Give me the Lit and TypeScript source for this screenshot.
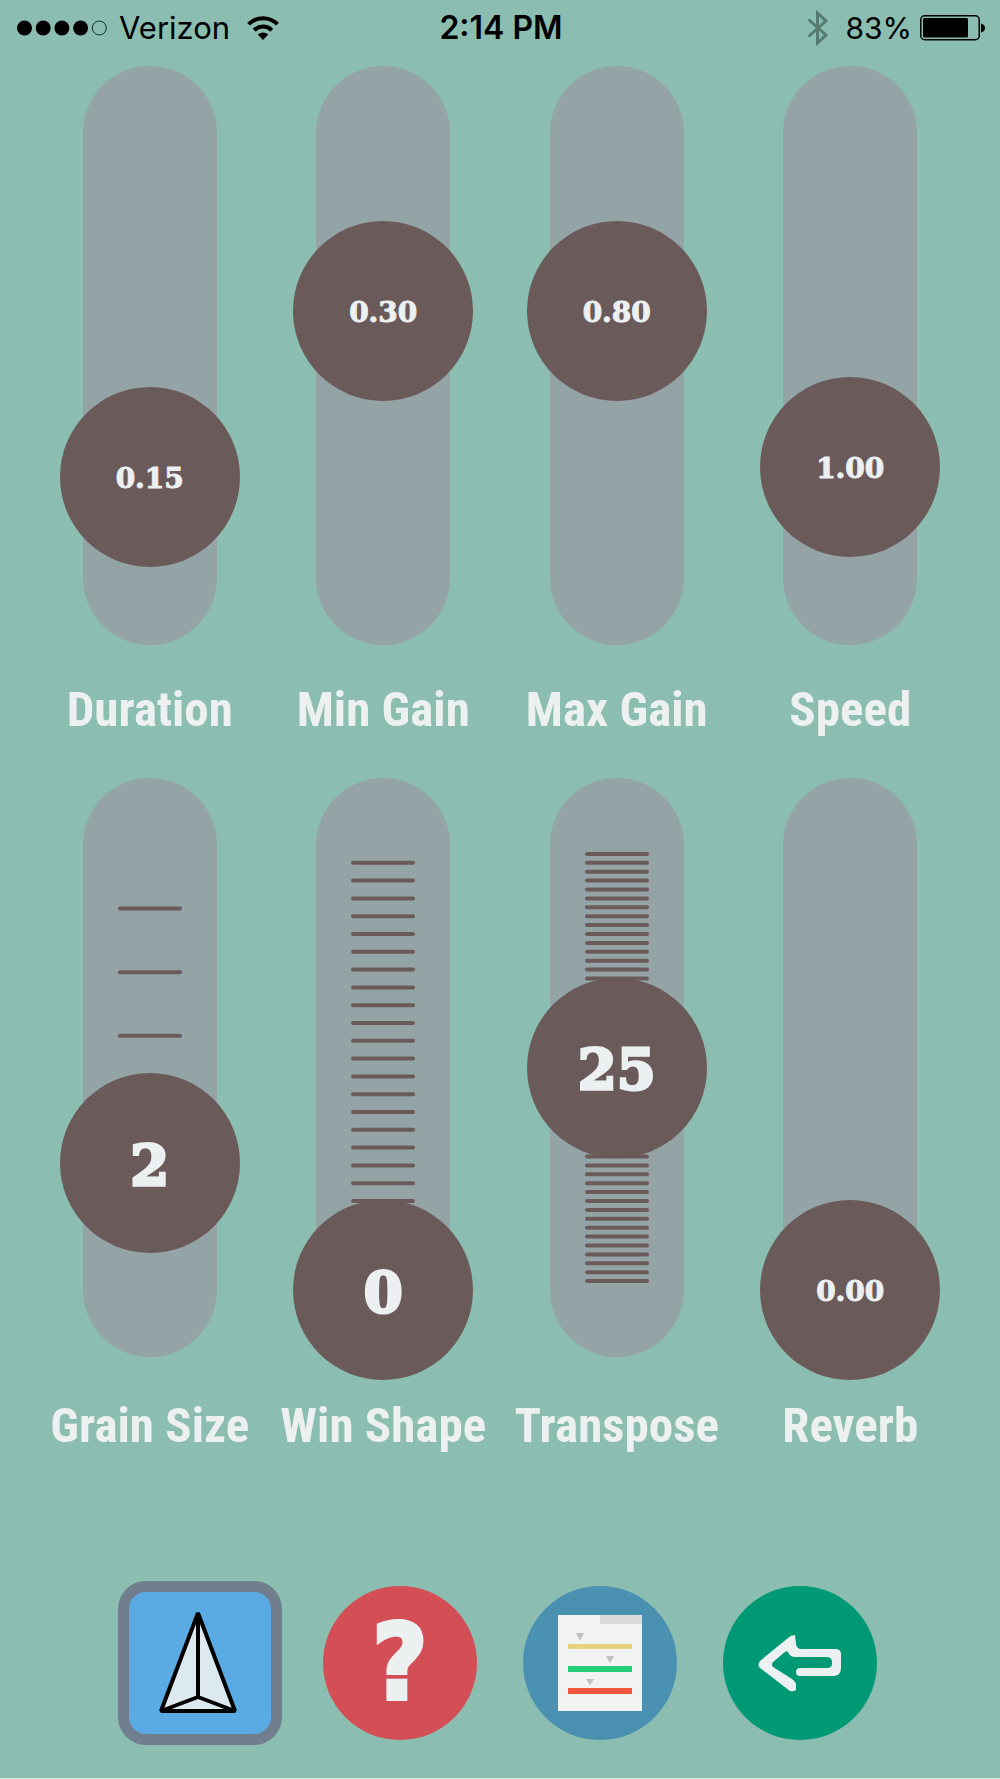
import { LitElement, html, svg, css } from "lit";
import { customElement, property, state } from "lit/decorators.js";

interface Param {
  id: string;
  label: string;
  /** Travel of the knob, from 0 at the bottom to 1 at the top. */
  position: number;
  /** Number of discrete steps; 0 for a continuous control. */
  steps: number;
  format: (position: number) => string;
}

const linear = (max: number) => (p: number) => (p * max).toFixed(2);

const ROWS: Param[][] = [
  [
    { id: "duration", label: "Duration", position: 0.226, steps: 0, format: (p) => (p * 0.664).toFixed(2) },
    { id: "min-gain", label: "Min Gain", position: 0.6, steps: 0, format: linear(0.5) },
    { id: "max-gain", label: "Max Gain", position: 0.6, steps: 0, format: (p) => (0.5 + p * 0.5).toFixed(2) },
    { id: "speed", label: "Speed", position: 0.25, steps: 0, format: linear(4) },
  ],
  [
    { id: "grain-size", label: "Grain Size", position: 2 / 7, steps: 7, format: (p) => String(Math.round(p * 7)) },
    { id: "win-shape", label: "Win Shape", position: 0, steps: 25, format: (p) => String(Math.round(p * 25)) },
    { id: "transpose", label: "Transpose", position: 0.5, steps: 50, format: (p) => String(Math.round(p * 50)) },
    { id: "reverb", label: "Reverb", position: 0, steps: 0, format: linear(1) },
  ],
];

/** Knob travel in pixels: track height less the two rounded ends. */
const TRAVEL = 445;
const TRACK_END = 67;

@customElement("param-slider")
class ParamSlider extends LitElement {
  static styles = css`
    :host {
      display: flex;
      flex-direction: column;
      align-items: center;
      gap: var(--label-gap, 33px);
    }
    .well {
      position: relative;
      display: flex;
      align-items: center;
      justify-content: center;
      width: 134px;
      height: 579px;
      border-radius: 67px;
      background: #94a4a6;
    }
    .ticks {
      position: absolute;
      inset: 0;
      stroke: #6b5a5a;
      stroke-width: 4;
      stroke-linecap: round;
    }
    .range {
      appearance: none;
      -webkit-appearance: none;
      flex: none;
      position: relative;
      writing-mode: vertical-lr;
      direction: rtl;
      width: 180px;
      height: 625px;
      margin: 0;
      background: transparent;
      cursor: grab;
    }
    .range::-webkit-slider-runnable-track {
      width: 180px;
      height: 100%;
      background: transparent;
    }
    .range::-webkit-slider-thumb {
      -webkit-appearance: none;
      width: 180px;
      height: 180px;
      border-radius: 50%;
      background: #6b5a5a;
    }
    .range::-moz-range-thumb {
      width: 180px;
      height: 180px;
      border: 0;
      border-radius: 50%;
      background: #6b5a5a;
    }
    .value {
      position: absolute;
      left: 0;
      right: 0;
      height: 60px;
      margin-bottom: -32px;
      text-align: center;
      pointer-events: none;
      color: #ecf0f1;
      font: bold 28px/60px "DejaVu Serif", serif;
      -webkit-text-stroke: 1px #ecf0f1;
    }
    .value.stepped {
      font-size: 56px;
      -webkit-text-stroke: 3px #ecf0f1;
    }
    .name {
      color: #ecf0f1;
      font: bold 49px/64px "Roboto Condensed", "Liberation Sans Narrow", "Liberation Sans", sans-serif;
      white-space: nowrap;
    }
  `;

  @property({ attribute: false }) param!: Param;
  @state() private moved?: number;

  private onInput(e: Event) {
    this.moved = Number((e.target as HTMLInputElement).value);
  }

  render() {
    const { id, label, steps, format } = this.param;
    const position = this.moved ?? this.param.position;
    const ticks = Array.from({ length: Math.max(steps - 1, 0) }, (_, i) => {
      const y = TRACK_END + (TRAVEL * (i + 1)) / steps;
      return svg`<line x1="37" x2="97" y1=${y} y2=${y}></line>`;
    });
    return html`
      <div class="well">
        <svg class="ticks" width="134" height="579" viewBox="0 0 134 579" aria-hidden="true">${ticks}</svg>
        <input
          class="range"
          id=${id}
          type="range"
          min="0"
          max="1"
          step="any"
          .value=${String(position)}
          @input=${this.onInput}
        />
        <output
          class="value ${steps ? "stepped" : ""}"
          for=${id}
          style="bottom:${Math.round(TRACK_END + TRAVEL * position)}px"
          >${format(position)}</output
        >
      </div>
      <label class="name" for=${id}>${label}</label>
    `;
  }
}

@customElement("status-bar")
class StatusBar extends LitElement {
  static styles = css`
    :host {
      display: grid;
      grid-template-columns: 1fr auto 1fr;
      align-items: center;
      height: 52px;
      padding: 2px 15px 0 17px;
      color: #000;
      font: 30px/36px Inter, "Liberation Sans", sans-serif;
    }
    .side {
      display: flex;
      align-items: center;
      gap: 12px;
    }
    .end {
      justify-content: flex-end;
    }
    .carrier {
      font-size: 31px;
    }
    .charge {
      display: flex;
      align-items: center;
      gap: 8px;
    }
    .time {
      font-size: 32px;
      font-weight: 600;
    }
    .bluetooth {
      margin-right: 4px;
    }
  `;

  render() {
    return html`
      <div class="side">
        <svg width="90" height="16" viewBox="0 0 90 16" aria-hidden="true">
          ${[0, 1, 2, 3].map((i) => svg`<circle cx=${7.5 + i * 18.7} cy="8" r="7.5"></circle>`)}
          <circle cx="82.3" cy="8" r="7" fill="none" stroke="#10302a" stroke-width="1"></circle>
        </svg>
        <span class="carrier">Verizon</span>
        <svg width="42" height="26" viewBox="0 0 42 26" aria-hidden="true">
          <g fill="none" stroke="#000" stroke-width="4">
            <path d="M6.5 9.2a20.5 20.5 0 0 1 29 0"></path>
            <path d="M12.2 15.2a12.6 12.6 0 0 1 17.6 0"></path>
          </g>
          <path d="M21 25l-5.2-5.4a7.4 7.4 0 0 1 10.4 0z"></path>
        </svg>
      </div>
      <div class="time">2:14 PM</div>
      <div class="side end">
        <svg class="bluetooth" width="22" height="36" viewBox="0 0 22 36" aria-hidden="true">
          <path
            d="M1.5 9.5L19 25l-8.5 8V3L19 11 1.5 26.5"
            fill="none"
            stroke="#557b71"
            stroke-width="3"
          ></path>
        </svg>
        <div class="charge">
          <span>83%</span>
          <svg width="65" height="26" viewBox="0 0 65 26" aria-hidden="true">
            <rect x="0.75" y="0.75" width="58.5" height="24" rx="4" fill="none" stroke="#000" stroke-width="1.5"></rect>
            <rect x="3" y="3" width="45" height="19.5" rx="1.5"></rect>
            <path d="M61 8.5q4 1 4 4.500t-4 4.500z"></path>
          </svg>
        </div>
      </div>
    `;
  }
}

@customElement("app-root")
class AppRoot extends LitElement {
  static styles = css`
    :host {
      display: block;
      box-sizing: border-box;
      min-height: 100vh;
      background: #8bbdb1;
      border-bottom: 1px solid #cdeee5;
    }
    .panel {
      display: flex;
      flex-direction: column;
      gap: 36px;
      padding: 12px 33px 0;
    }
    .row {
      display: grid;
      grid-template-columns: repeat(4, 1fr);
    }
    .row:last-child {
      --label-gap: 37px;
    }
    .actions {
      display: grid;
      grid-template-columns: repeat(4, 1fr);
      place-items: center;
      margin-top: 123px;
      padding: 0 100px 33px;
    }
    .action {
      box-sizing: border-box;
      display: flex;
      align-items: center;
      justify-content: center;
      width: 154px;
      height: 154px;
      padding: 0;
      border: 0;
      border-radius: 50%;
      cursor: pointer;
    }
    .draw {
      width: 164px;
      height: 164px;
      border: 11px solid #707e8e;
      border-radius: 28px;
      background: #5aabe3;
    }
    .help {
      background: #d44e55;
      color: #ecf0f1;
      font: bold 106px/154px "DejaVu Sans Condensed", "DejaVu Sans", sans-serif;
      -webkit-text-stroke: 4px #ecf0f1;
    }
    .presets {
      background: #4a90b0;
    }
    .back {
      background: #009975;
    }
    .icon {
      flex: none;
      display: block;
    }
  `;

  render() {
    return html`
      <status-bar></status-bar>
      <main>
        <div class="panel">
          ${ROWS.map(
            (row) => html`<div class="row">${row.map((p) => html`<param-slider .param=${p}></param-slider>`)}</div>`,
          )}
        </div>
        <nav class="actions">
          <button class="action draw" type="button" aria-label="Shape">
            <svg class="icon" width="142" height="142" viewBox="11 11 142 142">
              <g stroke="#000" stroke-width="4" stroke-linejoin="bevel">
                <path d="M80 32L43 130H117Z" fill="#dce9ee"></path>
                <path d="M80 32V116M43 130L80 116L117 130" fill="none"></path>
              </g>
            </svg>
          </button>
          <button class="action help" type="button" aria-label="Help">?</button>
          <button class="action presets" type="button" aria-label="Presets">
            <svg class="icon" width="154" height="154" viewBox="0 0 154 154">
              <path d="M35 29H119V125H35Z" fill="#f1f2f2"></path>
              <path d="M77 29H119V38H77Z" fill="#dadbdb"></path>
              <path d="M53 47H61L57 55ZM83 70H91L87 77ZM63 93H71L67 99Z" fill="#bfc0c0"></path>
              <path d="M45 58H109V63H45Z" fill="#e8d27c"></path>
              <path d="M45 80H109V86H45Z" fill="#25cf78"></path>
              <path d="M45 102H109V108H45Z" fill="#f1543b"></path>
            </svg>
          </button>
          <button class="action back" type="button" aria-label="Back">
            <svg class="icon" width="154" height="154" viewBox="0 0 154 154">
              <path
                d="M72 49Q68 49 65 52L37 75Q34 79 37 82L67 105Q70 106 73 104V98Q72 95 69 93L50 81Q48 78.500 50 76L62 66Q65 64 66 68Q68 71 72 71H103Q109 71 109 76V78Q109 82 104 82H77Q73 82 73 86T77 90H111Q118 89 118 82V68Q118 63 112 63H78Q74 63 73 58Z"
                fill="#ecf0f1"
              ></path>
            </svg>
          </button>
        </nav>
      </main>
    `;
  }
}
